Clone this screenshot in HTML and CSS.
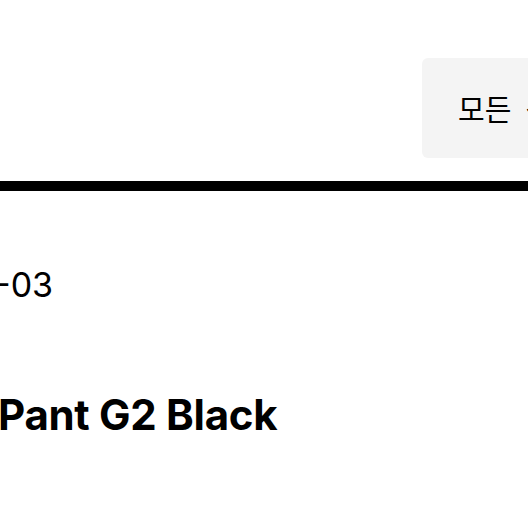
FILE: index.html
```html
<!DOCTYPE html>
<html lang="ko">
<head>
<meta charset="utf-8">
<link rel="stylesheet" href="styles.css">
</head>
<body>
<div class="page">
  <header class="top">
    <div class="filter-btn">모든 상품</div>
  </header>
  <div class="rule"></div>
  <div class="date">-03</div>
  <h1 class="title">Pant G2 Black</h1>
</div>
</body>
</html>
```
FILE: styles.css
```css
html, body {
  margin: 0;
  padding: 0;
  background: #ffffff;
}
.page {
  width: 528px;
  height: 528px;
  overflow: hidden;
  color: #000;
}
.top {
  display: flex;
  padding-top: 58px;
  padding-left: 422px;
  height: 100px;
  margin-bottom: 23px;
}
.filter-btn {
  flex: none;
  width: 200px;
  height: 100px;
  box-sizing: border-box;
  background: #f4f4f4;
  border-radius: 6px;
  padding-left: 36px;
  display: flex;
  align-items: center;
  font-family: "Noto Sans CJK KR", "Noto Sans", sans-serif;
  font-size: 29px;
  white-space: nowrap;
  word-spacing: 6px;
  color: #000;
}
.rule {
  height: 10px;
  background: #000;
}
.date {
  margin-top: 74px;
  margin-left: -5px;
  font-family: Inter, "Liberation Sans", sans-serif;
  font-weight: 400;
  font-size: 34px;
  line-height: 40px;
}
.title {
  margin: 85px 0 0 -2px;
  font-family: Inter, "Liberation Sans", sans-serif;
  font-weight: 700;
  font-size: 42px;
  line-height: 50px;
  letter-spacing: -0.3px;
}
```
